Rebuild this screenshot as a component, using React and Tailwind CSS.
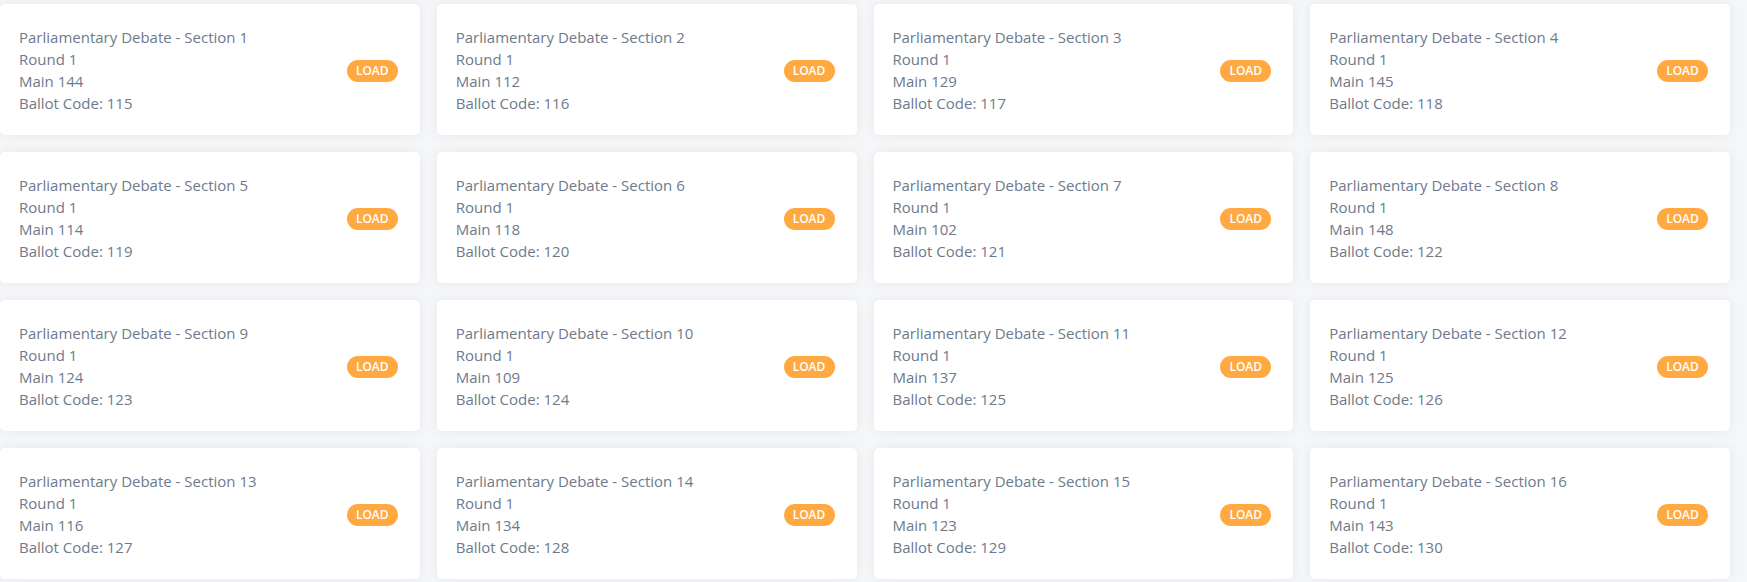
import React from 'react';

const mains = [144, 112, 129, 145, 114, 118, 102, 148, 124, 109, 137, 125, 116, 134, 123, 143];

const sections = mains.map((main, i) => ({
  section: i + 1,
  round: 1,
  main,
  ballot: 115 + i,
}));

const SectionCard = ({ item }) => (
  <div className="flex h-[131px] items-center justify-between rounded-[5px] bg-white pl-[19px] pr-[22px] shadow-[0_0_12px_rgba(30,40,60,0.06)]">
    <div className="text-[15px] leading-[22px] text-[#6e7a8b]">
      <div>Parliamentary Debate - Section {item.section}</div>
      <div>Round {item.round}</div>
      <div>Main {item.main}</div>
      <div>Ballot Code: {item.ballot}</div>
    </div>
    <button className="mt-[3px] flex h-[22px] w-[51px] items-center justify-center rounded-full bg-[#ffa940] text-[12px] font-semibold leading-none text-white">
      LOAD
    </button>
  </div>
);

export default function App() {
  return (
    <div
      className="min-h-screen bg-[#f5f6f8] pt-[4px] pr-[17px]"
      style={{ fontFamily: '"Open Sans", "Noto Sans", sans-serif' }}
    >
      <div className="grid grid-cols-4 gap-x-[17px] gap-y-[17px]">
        {sections.map((item) => (
          <SectionCard key={item.section} item={item} />
        ))}
      </div>
    </div>
  );
}
